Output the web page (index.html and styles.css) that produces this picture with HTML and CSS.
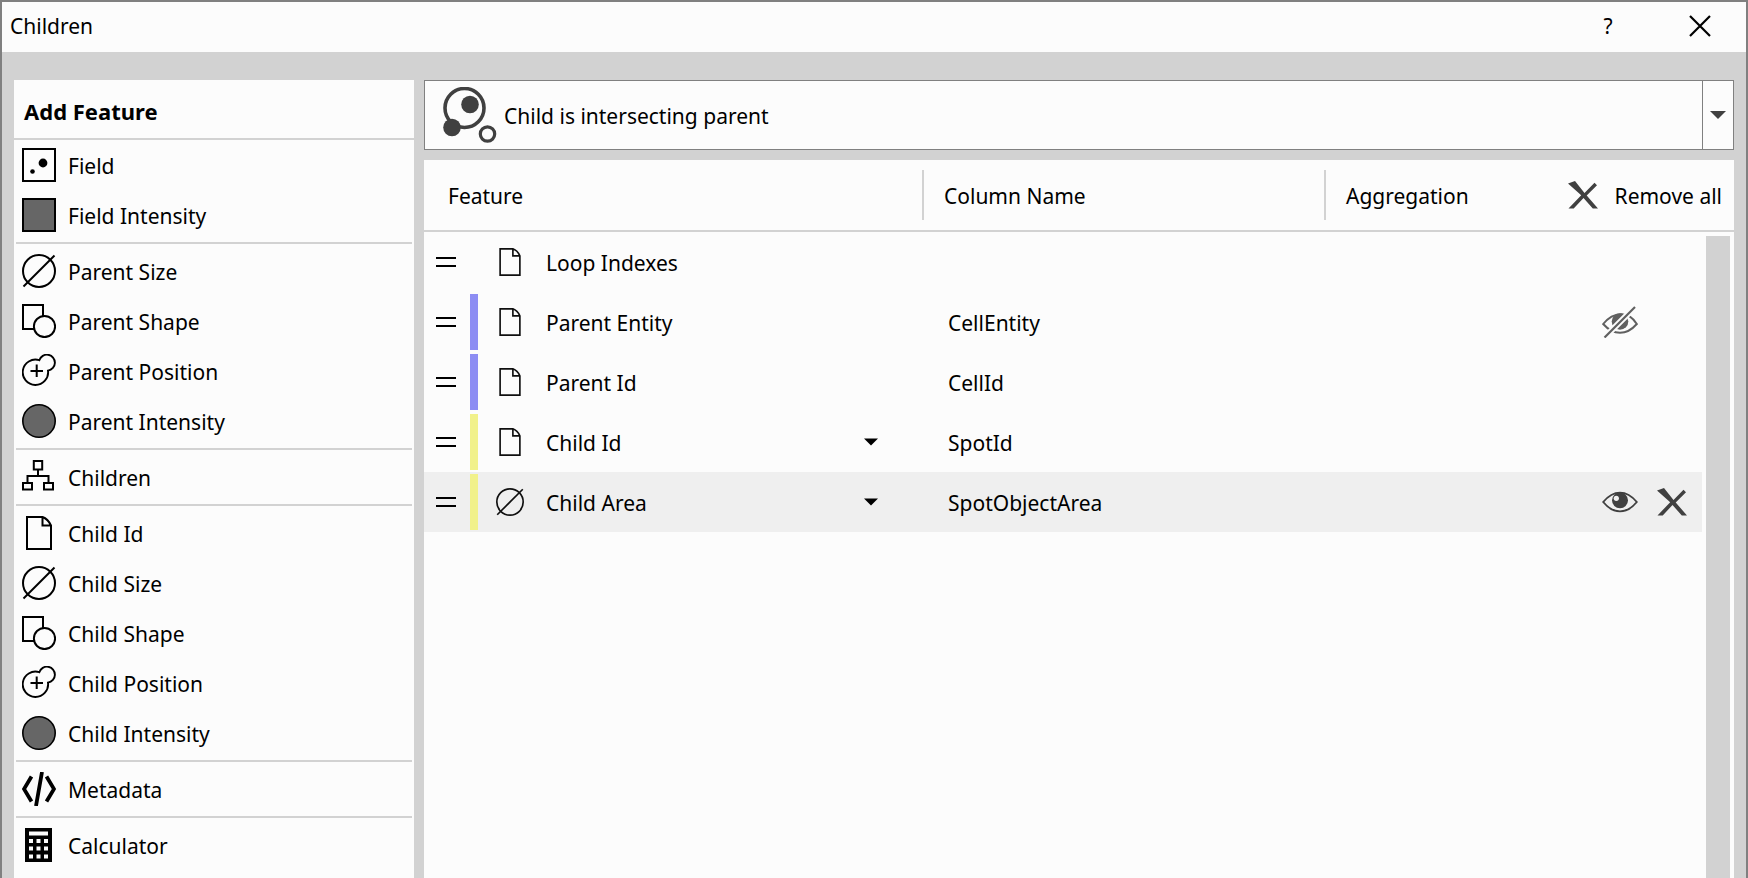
FILE: index.html
```html
<!DOCTYPE html>
<html lang="en">
<head>
<meta charset="utf-8">
<title>Children</title>
<link rel="stylesheet" href="styles.css">
</head>
<body>
<svg class="defs" aria-hidden="true">
  <symbol id="field" viewBox="0 0 34 34"><rect x="1" y="1" width="32" height="32" fill="none" stroke="#000" stroke-width="2"/><circle cx="21" cy="15" r="4.4"/><circle cx="10.500" cy="23.500" r="2.300"/></symbol>
  <symbol id="square" viewBox="0 0 34 34"><rect x="1" y="1" width="32" height="32" fill="#666" stroke="#000" stroke-width="2"/></symbol>
  <symbol id="size" viewBox="0 0 34 34"><g fill="none" stroke="currentColor" stroke-width="2"><circle cx="17" cy="17" r="16"/><path d="M1.500 32.500 32.500 1.500"/></g></symbol>
  <symbol id="shape" viewBox="0 0 34 34"><g fill="none" stroke="#000" stroke-width="2"><path d="M12 25H1V1h20v11"/><circle cx="22.500" cy="22.500" r="10.600"/></g></symbol>
  <symbol id="position" viewBox="0 0 34 34"><path d="M17.300 6.200A8 8 0 1 1 26 16.600A12.700 12.700 0 1 1 17.300 6.200Z" fill="none" stroke="#000" stroke-width="1.900"/><path d="M14.700 10.500v12.500M8.500 17h12.500" stroke="#000" stroke-width="2"/></symbol>
  <symbol id="circle" viewBox="0 0 34 34"><circle cx="17" cy="17" r="16.200" fill="#666" stroke="#000" stroke-width="1.600"/></symbol>
  <symbol id="tree" viewBox="0 0 34 34"><path d="M11.800 1h8.400v8.400h-8.400zM1 23h9v6.500H1zM22 23h9v6.500h-9zM16 9.500V16M5.500 23v-7h21v7" fill="none" stroke="#000" stroke-width="2"/></symbol>
  <symbol id="page" viewBox="0 0 34 34"><path d="M5 1h15.500Q26 3 29 9.500V33H5ZM20.500 1v8.500H29" fill="none" stroke="currentColor" stroke-width="2"/></symbol>
  <symbol id="code" viewBox="0 0 34 34"><path d="M9.500 4.500 2 17l7.500 12.500M24.500 4.500 32 17l-7.500 12.500M20 0l-6 34" fill="none" stroke="#000" stroke-width="3.800"/></symbol>
  <symbol id="calc" viewBox="0 0 34 34"><path d="M3 0h27v34H3z"/><path fill="#fcfcfc" d="M7 3.500h19v4H7zM7 11h4v4H7zM14.500 11h4v4h-4zM22 11h4v4h-4zM7 18.500h4v4H7zM14.500 18.500h4v4h-4zM22 18.500h4v4h-4zM7 26.500h4v4H7zM14.500 26.500h4v4h-4zM22 26.500h4v4h-4z"/></symbol>
  <symbol id="handle" viewBox="0 0 20 10"><path d="M0 0h20v2H0zM0 8h20v2H0z"/></symbol>
  <symbol id="cross" viewBox="0 0 30 28"><path fill="#404040" d="M0 2.500 7 0 16.500 12 26.500 1.800 29 4.200 18.700 14.500 30 27.500H24.800L15.500 17 5.700 27.500H0.500L13.200 14.200Z"/></symbol>
  <symbol id="eye" viewBox="0 0 36 22"><path d="M1.200 11Q9 1.600 18 1.600T34.800 11Q27 20.400 18 20.400T1.200 11Z" fill="none" stroke="#404040" stroke-width="1.900"/><circle cx="18" cy="9.300" r="8" fill="#404040"/><circle cx="14.300" cy="7.300" r="2.600" fill="#efefef"/></symbol>
  <symbol id="eye-off" viewBox="0 0 36 32"><path d="M1.200 18Q9 8.200 19 8.200T34.800 18Q27 26.800 18 26.800T1.200 18Z" fill="none" stroke="#606060" stroke-width="2"/><circle cx="18" cy="15.500" r="8.300" fill="#606060"/><path d="M2 32 34 0" stroke="#fcfcfc" stroke-width="6"/><path d="M2.500 31.500 33 1" stroke="#606060" stroke-width="2.200"/></symbol>
  <symbol id="arrow" viewBox="0 0 16 8"><path fill="currentColor" d="M0 0h16L8 8z"/></symbol>
</svg>

<div class="window">
  <header class="titlebar">
    <h1 class="title">Children</h1>
    <button class="title-btn" type="button" aria-label="Help">?</button>
    <button class="title-btn" type="button" aria-label="Close"><svg class="close" viewBox="0 0 22 22"><path d="M1 1 21 21M21 1 1 21" stroke="#000" stroke-width="2.200"/></svg></button>
  </header>

  <div class="content">
    <nav class="sidebar" aria-label="Add Feature">
      <h2 class="sidebar-head">Add Feature</h2>
      <div class="group">
        <button class="item" type="button"><svg class="icon"><use href="#field"/></svg><span class="label">Field</span></button>
        <button class="item" type="button"><svg class="icon"><use href="#square"/></svg><span class="label">Field Intensity</span></button>
      </div>
      <div class="group">
        <button class="item" type="button"><svg class="icon"><use href="#size"/></svg><span class="label">Parent Size</span></button>
        <button class="item" type="button"><svg class="icon"><use href="#shape"/></svg><span class="label">Parent Shape</span></button>
        <button class="item" type="button"><svg class="icon"><use href="#position"/></svg><span class="label">Parent Position</span></button>
        <button class="item" type="button"><svg class="icon"><use href="#circle"/></svg><span class="label">Parent Intensity</span></button>
      </div>
      <div class="group">
        <button class="item" type="button"><svg class="icon"><use href="#tree"/></svg><span class="label">Children</span></button>
      </div>
      <div class="group">
        <button class="item" type="button"><svg class="icon"><use href="#page"/></svg><span class="label">Child Id</span></button>
        <button class="item" type="button"><svg class="icon"><use href="#size"/></svg><span class="label">Child Size</span></button>
        <button class="item" type="button"><svg class="icon"><use href="#shape"/></svg><span class="label">Child Shape</span></button>
        <button class="item" type="button"><svg class="icon"><use href="#position"/></svg><span class="label">Child Position</span></button>
        <button class="item" type="button"><svg class="icon"><use href="#circle"/></svg><span class="label">Child Intensity</span></button>
      </div>
      <div class="group">
        <button class="item" type="button"><svg class="icon"><use href="#code"/></svg><span class="label">Metadata</span></button>
      </div>
      <div class="group">
        <button class="item" type="button"><svg class="icon"><use href="#calc"/></svg><span class="label">Calculator</span></button>
      </div>
    </nav>

    <main class="main">
      <div class="combo">
        <svg class="combo-icon" viewBox="0 0 54 56"><circle cx="21.500" cy="21" r="19.500" fill="none" stroke="#404040" stroke-width="3.600"/><circle cx="27" cy="17.500" r="8.800" fill="#404040"/><circle cx="9" cy="40.500" r="8.800" fill="#404040"/><circle cx="44.500" cy="47" r="7.200" fill="none" stroke="#404040" stroke-width="3.200"/></svg>
        <select class="combo-select" aria-label="Relation"><option>Child is intersecting parent</option></select>
        <span class="combo-drop"><svg class="combo-arrow"><use href="#arrow"/></svg></span>
      </div>

      <div class="table-panel">
        <table class="features">
          <colgroup><col class="col-feature"><col class="col-name"><col><col class="col-actions"><col class="col-gutter"></colgroup>
          <thead>
            <tr>
              <th scope="col"><div class="head head-first">Feature</div></th>
              <th scope="col"><div class="head">Column Name</div></th>
              <th scope="col"><div class="head">Aggregation</div></th>
              <th colspan="2"><button class="remove-all" type="button"><svg class="cross"><use href="#cross"/></svg><span class="label">Remove all</span></button></th>
            </tr>
          </thead>
          <tbody>
            <tr>
              <td><div class="feature"><svg class="handle"><use href="#handle"/></svg><span class="bar"></span><svg class="row-icon"><use href="#page"/></svg><span class="label">Loop Indexes</span></div></td>
              <td></td><td></td><td></td><td></td>
            </tr>
            <tr>
              <td><div class="feature"><svg class="handle"><use href="#handle"/></svg><span class="bar bar-parent"></span><svg class="row-icon"><use href="#page"/></svg><span class="label">Parent Entity</span></div></td>
              <td><input class="name" type="text" value="CellEntity" aria-label="Column name for Parent Entity"></td><td></td>
              <td><div class="actions"><button class="act" type="button" aria-label="Show column"><svg class="eye-off"><use href="#eye-off"/></svg></button></div></td><td></td>
            </tr>
            <tr>
              <td><div class="feature"><svg class="handle"><use href="#handle"/></svg><span class="bar bar-parent"></span><svg class="row-icon"><use href="#page"/></svg><span class="label">Parent Id</span></div></td>
              <td><input class="name" type="text" value="CellId" aria-label="Column name for Parent Id"></td><td></td><td></td><td></td>
            </tr>
            <tr>
              <td><div class="feature"><svg class="handle"><use href="#handle"/></svg><span class="bar bar-child"></span><svg class="row-icon"><use href="#page"/></svg><select class="pick" aria-label="Feature"><option>Child Id</option></select><svg class="pick-arrow"><use href="#arrow"/></svg></div></td>
              <td><input class="name" type="text" value="SpotId" aria-label="Column name for Child Id"></td><td></td><td></td><td></td>
            </tr>
            <tr class="selected">
              <td><div class="feature"><svg class="handle"><use href="#handle"/></svg><span class="bar bar-child"></span><svg class="row-icon"><use href="#size"/></svg><select class="pick" aria-label="Feature"><option>Child Area</option></select><svg class="pick-arrow"><use href="#arrow"/></svg></div></td>
              <td><input class="name" type="text" value="SpotObjectArea" aria-label="Column name for Child Area"></td><td></td>
              <td><div class="actions"><button class="act" type="button" aria-label="Hide column"><svg class="eye"><use href="#eye"/></svg></button><button class="act" type="button" aria-label="Remove"><svg class="cross"><use href="#cross"/></svg></button></div></td><td></td>
            </tr>
          </tbody>
        </table>
        <div class="scrollbar"></div>
      </div>
    </main>
  </div>
</div>
</body>
</html>
```
FILE: styles.css
```css
* { box-sizing: border-box; }

body {
  margin: 0;
  color: #000;
  font: 21px/30px "Noto Sans", "DejaVu Sans", sans-serif;
}

button, input, select {
  margin: 0;
  padding: 0;
  border: 0;
  border-radius: 0;
  background: none;
  color: inherit;
  font: inherit;
  appearance: none;
}

select { cursor: pointer; opacity: 1; }
svg { display: block; flex: none; }
.defs { position: absolute; width: 0; height: 0; }
.label { padding-top: 2px; }

.window {
  display: flex;
  flex-direction: column;
  min-height: 100vh;
  border: 2px solid #808080;
  border-bottom: 0;
  background: #d2d2d2;
}

.titlebar {
  display: flex;
  align-items: center;
  height: 50px;
  padding: 0 0 2px 8px;
  background: #fcfcfc;
}
.title { flex: 1; margin: 0; font-size: 21px; font-weight: 400; line-height: 30px; }
.title-btn { display: flex; align-items: center; justify-content: center; width: 92px; height: 48px; }
.close { width: 22px; height: 22px; }

.content {
  flex: 1;
  display: grid;
  grid-template-columns: 400px minmax(0, 1fr);
  gap: 10px;
  padding: 28px 12px 0;
}

.sidebar { background: #fcfcfc; }
.sidebar-head {
  margin: 0;
  padding: 16px 10px 12px;
  border-bottom: 2px solid #d2d2d2;
  font-size: 22px;
  font-weight: 700;
  line-height: 30px;
}
.group + .group { margin: 2px 2px 0; padding-top: 2px; border-top: 2px solid #d2d2d2; }
.group { margin: 0 2px; }
.item {
  display: flex;
  align-items: center;
  gap: 12px;
  width: 100%;
  height: 50px;
  padding: 0 6px;
  text-align: left;
}
.icon { width: 34px; height: 34px; }

.main { display: flex; flex-direction: column; gap: 10px; }

.combo {
  display: grid;
  grid-template-columns: 79px minmax(0, 1fr) 31px;
  height: 70px;
  border: 1px solid #808080;
  background: #fcfcfc;
}
.combo-icon { grid-area: 1 / 1; align-self: center; justify-self: end; width: 54px; height: 56px; margin-right: 7px; pointer-events: none; }
.combo-select { grid-area: 1 / 1 / 2 / 4; padding: 2px 31px 0 79px; }
.combo-drop {
  grid-area: 1 / 3;
  display: flex;
  align-items: center;
  justify-content: center;
  border-left: 1px solid #808080;
  pointer-events: none;
}
.combo-arrow { width: 16px; height: 8px; color: #404040; }

.table-panel { position: relative; flex: 1; background: #fcfcfc; }
.features { width: 100%; border-spacing: 0; table-layout: fixed; }
.col-feature { width: 498px; }
.col-name { width: 402px; }
.col-actions { width: 134px; }
.col-gutter { width: 32px; }

th, td { padding: 0; text-align: left; }
th { height: 72px; border-bottom: 2px solid #d2d2d2; font-weight: 400; }
.head { display: flex; align-items: center; height: 50px; padding: 2px 0 0 20px; border-left: 2px solid #d2d2d2; }
.head-first { padding-left: 24px; border-left: 0; }
.remove-all { display: flex; align-items: center; justify-content: flex-end; gap: 17px; width: 100%; height: 50px; padding-right: 12px; white-space: nowrap; }
.cross { width: 30px; height: 28px; }

tbody tr { height: 60px; }
.selected td:not(:last-child) { background: #efefef; }
.feature { display: flex; align-items: center; height: 60px; padding-left: 12px; }
.handle { width: 20px; height: 10px; margin-right: 14px; }
.bar { width: 8px; height: 56px; margin-right: 18px; }
.bar-parent { background: #8d8df3; }
.bar-child { background: #f1f18b; }
.row-icon { width: 28px; height: 28px; margin-right: 22px; color: #101010; }
.pick { flex: 1; height: 56px; margin-right: -58px; padding: 2px 58px 0 0; }
.pick-arrow { width: 14px; height: 8px; margin-right: 44px; pointer-events: none; }
.name { display: block; width: 100%; height: 56px; padding: 2px 0 0 26px; }
.actions { display: flex; align-items: center; gap: 19px; padding-left: 34px; }
.act { display: flex; align-items: center; height: 56px; }
.eye { width: 36px; height: 22px; }
.eye-off { width: 36px; height: 32px; }

.scrollbar { position: absolute; top: 76px; right: 4px; bottom: 0; width: 24px; background: #d2d2d2; }
```
